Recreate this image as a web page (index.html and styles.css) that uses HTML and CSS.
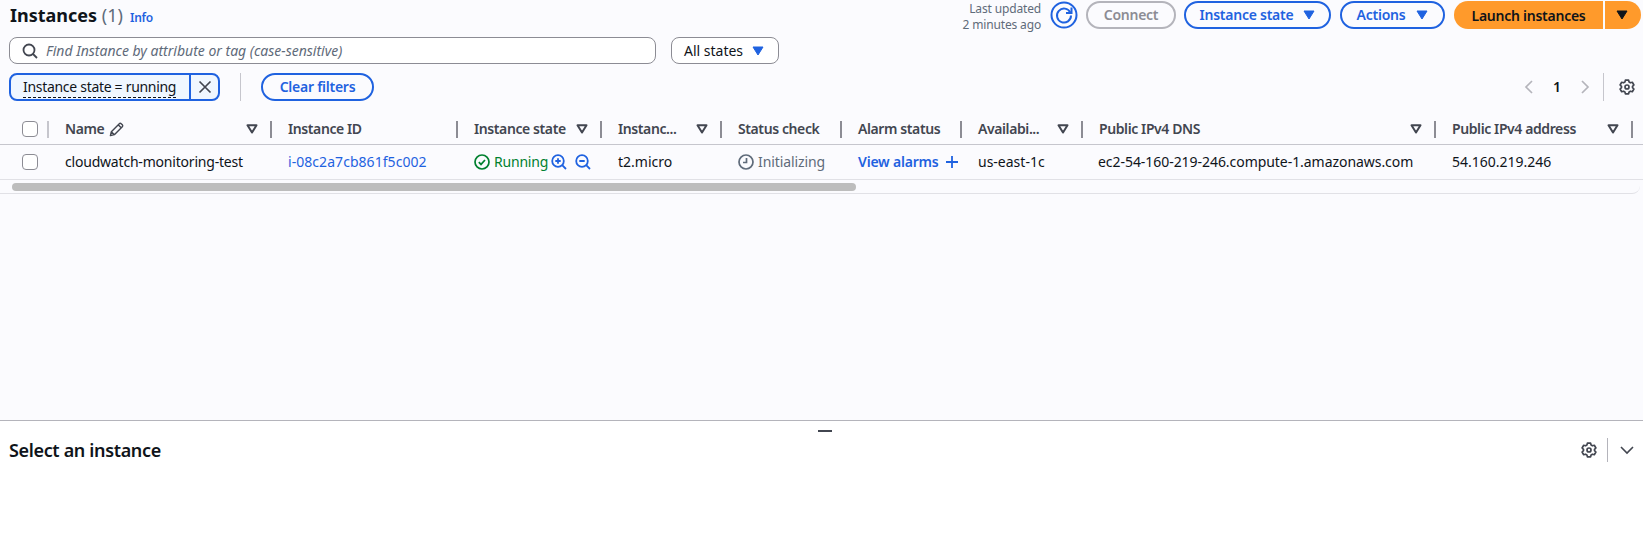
FILE: index.html
```html
<!DOCTYPE html>
<html lang="en">
<head>
<meta charset="utf-8">
<title>Instances</title>
<link rel="stylesheet" href="styles.css">
</head>
<body>
<svg class="defs" width="0" height="0" aria-hidden="true">
  <symbol id="gear" viewBox="0 0 16 16"><path d="M6.4 1.2h3.2l.5 1.9 1.3.7 1.9-.5 1.6 2.7-1.4 1.4v1.2l1.4 1.4-1.6 2.7-1.9-.5-1.3.7-.5 1.9H6.4l-.5-1.9-1.3-.7-1.9.5-1.6-2.7L2.500 8.600V7.400L1.100 6l1.600-2.700 1.900.5 1.300-.7z" fill="none" stroke="currentColor" stroke-width="1.700" stroke-linejoin="round"/><circle cx="8" cy="8" r="2" fill="none" stroke="currentColor" stroke-width="1.700"/></symbol>
  <symbol id="sort" viewBox="0 0 12 10"><path d="M1.500 1.300h9L6 8.500z" fill="none" stroke="currentColor" stroke-width="2" stroke-linejoin="round"/></symbol>
  <symbol id="caret" viewBox="0 0 12 10"><path d="M1 1h10L6 9z" fill="currentColor" stroke="currentColor" stroke-width="1" stroke-linejoin="round"/></symbol>
  <symbol id="zoomin" viewBox="0 0 16 16"><circle cx="7" cy="7" r="5.800" fill="none" stroke="currentColor" stroke-width="1.800"/><path d="M11.200 11.200 15 15M4.300 7h5.400M7 4.300v5.400" fill="none" stroke="currentColor" stroke-width="1.800"/></symbol>
  <symbol id="zoomout" viewBox="0 0 16 16"><circle cx="7" cy="7" r="5.800" fill="none" stroke="currentColor" stroke-width="1.800"/><path d="M11.200 11.200 15 15M4.300 7h5.400" fill="none" stroke="currentColor" stroke-width="1.800"/></symbol>
</svg>

<main class="top">
  <div class="head-row">
    <div class="title-group">
      <h1 class="title">Instances <span class="count">(1)</span></h1>
      <a class="info">Info</a>
    </div>
    <div class="actions">
      <div class="updated">Last updated<br>2 minutes ago</div>
      <button class="refresh" aria-label="Refresh">
        <svg width="28" height="28" viewBox="0 0 28 28"><circle cx="14" cy="14" r="12.500" fill="none" stroke="currentColor" stroke-width="2"/><path d="M20.300 11.500A7 7 0 1 0 21 14.500" fill="none" stroke="currentColor" stroke-width="2"/><path d="M21.500 6.500v5.500h-5.500" fill="none" stroke="currentColor" stroke-width="2"/></svg>
      </button>
      <button class="btn btn-disabled btn-connect">Connect</button>
      <button class="btn btn-state">Instance state <svg class="caret" width="12" height="10"><use href="#caret"/></svg></button>
      <button class="btn btn-actions">Actions <svg class="caret" width="12" height="10"><use href="#caret"/></svg></button>
      <div class="launch">
        <button class="launch-main">Launch instances</button>
        <button class="launch-more" aria-label="More"><svg width="12" height="10"><use href="#caret"/></svg></button>
      </div>
    </div>
  </div>

  <div class="search-row">
    <div class="search">
      <svg width="16" height="16" viewBox="0 0 16 16" class="search-icon"><circle cx="7" cy="7" r="5.500" fill="none" stroke="currentColor" stroke-width="1.800"/><path d="M11 11l4 4" stroke="currentColor" stroke-width="1.800" fill="none"/></svg>
      <span class="placeholder">Find Instance by attribute or tag (case-sensitive)</span>
    </div>
    <div class="select">All states <svg class="caret" width="12" height="10"><use href="#caret"/></svg></div>
  </div>

  <div class="filter-row">
    <div class="token">
      <span class="token-label"><span class="token-text">Instance state = running</span></span>
      <span class="token-close"><svg width="14" height="14" viewBox="0 0 14 14"><path d="M1.500 1.500l11 11M12.500 1.500l-11 11" stroke="currentColor" stroke-width="1.700" fill="none"/></svg></span>
    </div>
    <span class="vr"></span>
    <button class="btn btn-clear">Clear filters</button>
    <div class="pager">
      <svg class="pg-arrow" width="10" height="16" viewBox="0 0 10 16"><path d="M8 2 2 8l6 6" fill="none" stroke="currentColor" stroke-width="1.700"/></svg>
      <span class="pg-num">1</span>
      <svg class="pg-arrow" width="10" height="16" viewBox="0 0 10 16"><path d="M2 2l6 6-6 6" fill="none" stroke="currentColor" stroke-width="1.700"/></svg>
      <span class="pg-div"></span>
      <svg class="gear" width="16" height="16"><use href="#gear"/></svg>
    </div>
  </div>

  <div class="table">
    <div class="grid grid-head">
      <div class="hc hc-check"><span class="check"></span><i class="rz rz-light"></i></div>
      <div class="hc"><span class="lbl">Name</span><svg class="pencil" width="15" height="15" viewBox="0 0 16 16"><path d="M1.500 14.500l1-4.200L11 1.800a1.400 1.400 0 0 1 2 0l1.200 1.200a1.400 1.400 0 0 1 0 2L5.700 13.500zM2.500 10.300l3.200 3.200M9.800 3l3.200 3.200" fill="none" stroke="currentColor" stroke-width="1.500" stroke-linejoin="round"/></svg><svg class="sort" width="12" height="10"><use href="#sort"/></svg><i class="rz"></i></div>
      <div class="hc"><span class="lbl">Instance ID</span><i class="rz"></i></div>
      <div class="hc"><span class="lbl">Instance state</span><svg class="sort" width="12" height="10"><use href="#sort"/></svg><i class="rz"></i></div>
      <div class="hc"><span class="lbl">Instanc...</span><svg class="sort" width="12" height="10"><use href="#sort"/></svg><i class="rz"></i></div>
      <div class="hc"><span class="lbl">Status check</span><i class="rz"></i></div>
      <div class="hc"><span class="lbl">Alarm status</span><i class="rz"></i></div>
      <div class="hc"><span class="lbl">Availabi...</span><svg class="sort" width="12" height="10"><use href="#sort"/></svg><i class="rz"></i></div>
      <div class="hc"><span class="lbl">Public IPv4 DNS</span><svg class="sort" width="12" height="10"><use href="#sort"/></svg><i class="rz"></i></div>
      <div class="hc"><span class="lbl">Public IPv4 address</span><svg class="sort" width="12" height="10"><use href="#sort"/></svg><i class="rz"></i></div>
    </div>
    <div class="grid grid-row">
      <div class="c c-check"><span class="check"></span></div>
      <div class="c c-name">cloudwatch-monitoring-test</div>
      <div class="c"><a class="link">i-08c2a7cb861f5c002</a></div>
      <div class="c c-state"><svg class="ok" width="16" height="16" viewBox="0 0 16 16"><circle cx="8" cy="8" r="7" fill="none" stroke="currentColor" stroke-width="1.700"/><path d="M4.800 8.200l2.200 2.200 4-4.400" fill="none" stroke="currentColor" stroke-width="1.700"/></svg><span class="running">Running</span><svg class="zi" width="16" height="16"><use href="#zoomin"/></svg><svg class="zo" width="16" height="16"><use href="#zoomout"/></svg></div>
      <div class="c">t2.micro</div>
      <div class="c c-status"><svg width="16" height="16" viewBox="0 0 16 16"><circle cx="8" cy="8" r="7" fill="none" stroke="currentColor" stroke-width="1.700"/><path d="M8.500 4v4.500H5" fill="none" stroke="currentColor" stroke-width="1.700"/></svg><span>Initializing</span></div>
      <div class="c c-alarm"><a class="link link-strong">View alarms</a><svg width="14" height="14" viewBox="0 0 14 14"><path d="M7 1v12M1 7h12" stroke="currentColor" stroke-width="1.800" fill="none"/></svg></div>
      <div class="c">us-east-1c</div>
      <div class="c c-dns">ec2-54-160-219-246.compute-1.amazonaws.com</div>
      <div class="c">54.160.219.246</div>
    </div>
    <div class="scroll-track"><div class="scroll-thumb"></div></div>
  </div>
</main>

<section class="panel">
  <div class="handle"></div>
  <div class="panel-row">
    <h2 class="panel-title">Select an instance</h2>
    <div class="panel-tools">
      <svg class="gear" width="16" height="16"><use href="#gear"/></svg>
      <span class="panel-div"></span>
      <svg class="chev" width="14" height="10" viewBox="0 0 14 10"><path d="M1 2l6 6 6-6" fill="none" stroke="currentColor" stroke-width="1.600"/></svg>
    </div>
  </div>
</section>
</body>
</html>
```

FILE: styles.css
```css
* { box-sizing: border-box; }
html, body { margin: 0; padding: 0; }
body {
  width: 1643px;
  height: 541px;
  overflow: hidden;
  background: #fff;
  color: #0f141a;
  font-family: "Noto Sans", "Open Sans", sans-serif;
  font-size: 14px;
  line-height: 20px;
}
.defs { display: block; height: 0; }
button { font-family: inherit; padding: 0; cursor: pointer; background: none; }
a { text-decoration: none; }

.top {
  height: 420px;
  background: #fbfbfe;
  overflow: hidden;
}

.head-row {
  display: flex;
  justify-content: space-between;
  align-items: flex-start;
  height: 37px;
  padding: 1px 2px 0 10px;
}
.title-group { display: flex; align-items: baseline; gap: 8px; }
.title { margin: 0; font-size: 18px; line-height: 28px; font-weight: 700; }
.count { font-weight: 400; color: #5f6b7a; }
.info { font-size: 12px; line-height: 28px; font-weight: 600; color: #1f62e0; letter-spacing: -0.2px; margin-left: -1px; }

.actions { display: flex; align-items: flex-start; height: 28px; }
.updated {
  width: 120px;
  text-align: right;
  font-size: 12px;
  line-height: 16px;
  color: #5f6b7a;
  letter-spacing: -0.15px;
}
.refresh { width: 28px; height: 28px; border: 0; margin-left: 9px; color: #1f62e0; display: flex; }
.btn {
  height: 28px;
  border-radius: 14px;
  border: 2px solid #1f62e0;
  color: #1f62e0;
  font-size: 14px;
  font-weight: 600;
  line-height: 20px;
  letter-spacing: -0.25px;
  display: inline-flex;
  align-items: center;
  justify-content: center;
  background: transparent;
}
.btn-disabled { border-color: #b4b4bb; color: #8c8c94; }
.btn-connect { width: 90px; margin-left: 8px; }
.btn-state { width: 147px; margin-left: 8px; gap: 10px; }
.btn-actions { width: 105px; margin-left: 9px; gap: 11px; }
.launch { display: flex; gap: 2px; margin-left: 9px; }
.launch-main {
  width: 149px; height: 28px; border: 0;
  background: #ff9a2b;
  border-radius: 14px 0 0 14px;
  color: #0f141a;
  font-size: 14px;
  font-weight: 600;
  letter-spacing: -0.25px;
}
.launch-more {
  width: 36px; height: 28px; border: 0;
  background: #ff9a2b;
  border-radius: 0 14px 14px 0;
  color: #0f141a;
  display: flex; align-items: center; justify-content: center;
  padding-right: 3px;
}

.search-row { display: flex; gap: 15px; padding-left: 9px; height: 36px; }
.search {
  width: 647px; height: 27px;
  display: flex; align-items: center; gap: 8px;
  padding-left: 12px;
  border: 1px solid #8c8c94;
  border-radius: 8px;
  background: #fff;
}
.search-icon { color: #424650; }
.placeholder { font-style: italic; color: #5f6b7a; }
.select {
  width: 108px; height: 27px;
  display: flex; align-items: center; justify-content: space-between;
  padding: 0 14px 0 12px;
  border: 1px solid #8c8c94;
  border-radius: 8px;
  background: #fff;
}
.caret { color: #1f62e0; display: block; }

.filter-row { display: flex; align-items: center; padding-left: 9px; height: 28px; }
.token {
  width: 211px; height: 28px;
  display: flex;
  border: 2px solid #1f62e0;
  border-radius: 8px;
  background: #f0f7ff;
  overflow: hidden;
}
.token-label { width: 180px; padding-left: 12px; line-height: 23px; border-right: 2px solid #1f62e0; white-space: nowrap; letter-spacing: -0.3px; }
.token-text { border-bottom: 1px dashed #0f141a; display: inline-block; line-height: 20px; height: 21px; margin-top: 2px; }
.token-close { flex: 1; display: flex; align-items: center; justify-content: center; color: #424650; }
.vr { width: 1px; height: 28px; background: #c6c6cd; margin: 0 20px 0 20px; }
.btn-clear { width: 113px; }
.pager { margin-left: auto; display: flex; align-items: center; color: #b4b4bb; }
.pg-arrow { display: block; }
.pg-num { color: #0f141a; font-weight: 600; width: 46px; text-align: center; }
.pg-div { width: 1px; height: 28px; background: #c6c6cd; margin: 0 15px 0 13px; }
.gear { color: #424650; display: block; }
.pager .gear { margin-right: 8px; }

.table { margin-top: 19px; }
.grid {
  display: grid;
  grid-template-columns: 48px 223px 186px 144px 120px 120px 120px 121px 353px 197px 11px;
  width: 1643px;
}
.grid-head { height: 25px; border-bottom: 1px solid #c6c6cd; }
.hc {
  height: 18px;
  display: flex;
  align-items: center;
  padding-left: 17px;
  color: #424650;
  font-weight: 600;
  letter-spacing: -0.4px;
  white-space: nowrap;
  min-width: 0;
}
.hc-check { padding-left: 22px; }
.lbl { line-height: 18px; }
.pencil { margin-left: 5px; }
.sort { margin-left: auto; margin-right: 12px; color: #424650; }
.rz { width: 2px; height: 17px; background: #8c8c94; flex: none; margin-left: auto; margin-right: -1px; }
.sort + .rz { margin-left: 0; }
.rz-light { background: #c6c6cd; }
.check {
  display: block;
  width: 16px; height: 16px;
  border: 1px solid #8c8c94;
  border-radius: 4px;
  background: #fff;
}
.grid-row { height: 35px; border-bottom: 1px solid #e1e1e6; align-items: center; }
.c { padding-left: 17px; white-space: nowrap; display: flex; align-items: center; min-width: 0; }
.c-check { padding-left: 22px; }
.c-name { letter-spacing: -0.2px; }
.c-dns { letter-spacing: -0.05px; padding-left: 16px; }
.link { color: #1f62e0; letter-spacing: 0.05px; }
.link-strong { font-weight: 600; letter-spacing: -0.2px; }
.c-state { color: #00802f; gap: 3px; }
.running { letter-spacing: -0.2px; }
.ok { margin-right: 1px; }
.zi, .zo { color: #1f62e0; flex: none; }
.zo { margin-left: 5px; }
.c-status { color: #5f6b7a; gap: 4px; letter-spacing: -0.1px; }
.c-alarm { color: #1f62e0; gap: 6px; }

.scroll-track { height: 14px; width: 1640px; padding: 3px 0 0 12px; border-bottom: 1px solid #e1e1e6; border-radius: 0 0 8px 0; }
.scroll-thumb { width: 844px; height: 8px; background: #bdbdbd; border-radius: 4px; }

.panel { border-top: 1px solid #b4b4bb; background: #fff; height: 121px; }
.handle { width: 14px; height: 2px; background: #424650; margin: 9px 0 0 818px; }
.panel-row { display: flex; align-items: center; justify-content: space-between; padding: 0 9px; height: 30px; margin-top: 3px; }
.panel-title { margin: 0; font-size: 18px; line-height: 24px; font-weight: 600; letter-spacing: -0.35px; }
.panel-tools { display: flex; align-items: center; }
.panel-div { width: 1px; height: 24px; background: #b4b4bb; margin: 0 12px 0 10px; }
.chev { color: #424650; display: block; }
```
